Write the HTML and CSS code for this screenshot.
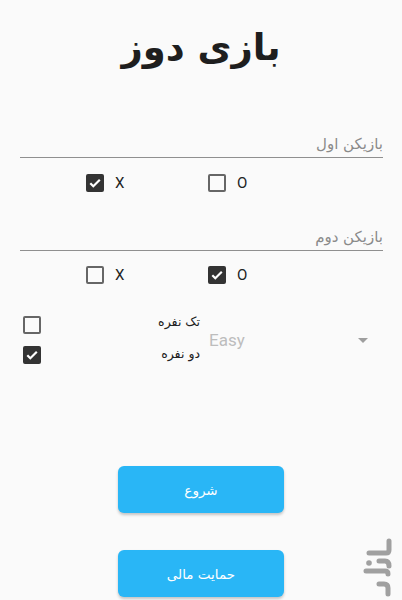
FILE: index.html
```html
<!DOCTYPE html>
<html lang="fa">
<head>
<meta charset="utf-8">
<title>بازی دوز</title>
<link rel="stylesheet" href="styles.css">
</head>
<body>
<div class="page">
  <h1 class="title">بازی دوز</h1>

  <div class="field field-first"><span class="placeholder">بازیکن اول</span></div>
  <div class="choice-row choice-row-first">
    <div class="choice"><span class="box checked"><svg viewBox="0 0 14 14"><path d="M2.3 7.2l3 3L11.8 3.8" /></svg></span><span class="choice-label">X</span></div>
    <div class="choice"><span class="box"></span><span class="choice-label">O</span></div>
  </div>

  <div class="field field-second"><span class="placeholder">بازیکن دوم</span></div>
  <div class="choice-row choice-row-second">
    <div class="choice"><span class="box"></span><span class="choice-label">X</span></div>
    <div class="choice"><span class="box checked"><svg viewBox="0 0 14 14"><path d="M2.3 7.2l3 3L11.8 3.8" /></svg></span><span class="choice-label">O</span></div>
  </div>

  <div class="mode">
    <div class="mode-boxes">
      <span class="box"></span>
      <span class="box checked"><svg viewBox="0 0 14 14"><path d="M2.3 7.2l3 3L11.8 3.8" /></svg></span>
    </div>
    <div class="mode-labels">
      <span class="mode-label">تک نفره</span>
      <span class="mode-label">دو نفره</span>
    </div>
    <div class="dropdown">
      <span class="dropdown-value">Easy</span>
      <span class="dropdown-arrow"></span>
    </div>
  </div>

  <button class="btn btn-start">شروع</button>
  <button class="btn btn-support">حمایت مالی</button>

  <svg class="watermark" viewBox="0 0 40 60" width="40" height="60">
    <g fill="none" stroke="#a0a0a0" stroke-width="5" stroke-linecap="round" stroke-linejoin="round">
      <path d="M27 3 V12 Q27 15 24 15 H7" />
      <path d="M17 23 H23 Q27 23 27 28" />
      <path d="M4 33 H23 Q26 33 26 36" />
      <path d="M17 46 H22 Q26 46 26 50 V56" />
    </g>
    <circle cx="7" cy="25" r="2.8" fill="#a0a0a0" />
  </svg>
</div>
</body>
</html>
```

FILE: styles.css
```css
html, body {
  margin: 0;
  padding: 0;
  background: #fafafa;
}

.page {
  position: relative;
  width: 402px;
  height: 600px;
  overflow: hidden;
  font-family: Roboto, "DejaVu Sans", sans-serif;
  color: #222;
}

.title {
  margin: 0;
  padding-top: 23px;
  font-family: "DejaVu Sans", sans-serif;
  font-size: 37px;
  font-weight: bold;
  line-height: 50px;
  text-align: center;
  direction: rtl;
  color: #1e1e1e;
}

.field {
  margin: 0 19px 0 20px;
  height: 27px;
  border-bottom: 1.5px solid #8f8f8f;
  direction: rtl;
  display: flex;
  align-items: center;
}

.field-first { margin-top: 57px; }
.field-second { margin-top: 31px; }

.placeholder {
  font-family: "DejaVu Sans", sans-serif;
  font-size: 15px;
  color: #8a8a8a;
}

.choice-row {
  display: flex;
  padding-left: 86px;
  height: 18px;
}

.choice-row-first { margin-top: 16px; }
.choice-row-second { margin-top: 15px; }

.choice {
  width: 122px;
  display: flex;
  align-items: center;
  gap: 11px;
}

.choice-label {
  font-size: 15px;
  color: #222;
  line-height: 18px;
}

.box {
  width: 18px;
  height: 18px;
  box-sizing: border-box;
  border: 2px solid #666;
  border-radius: 2px;
  display: block;
  flex: none;
}

.box.checked {
  background: #333;
  border-color: #333;
}

.box svg {
  display: block;
  width: 14px;
  height: 14px;
}

.box svg path {
  fill: none;
  stroke: #fff;
  stroke-width: 2.2;
}

.mode {
  margin-top: 32px;
  display: flex;
  align-items: center;
  height: 48px;
}

.mode-boxes {
  padding-left: 23px;
  display: flex;
  flex-direction: column;
  gap: 12px;
}

.mode-labels {
  width: 159px;
  display: flex;
  flex-direction: column;
  align-items: flex-start;
  gap: 14px;
  direction: rtl;
  margin-top: -4px;
}

.mode-label {
  font-family: "DejaVu Sans", sans-serif;
  font-size: 12.5px;
  line-height: 18px;
  color: #222;
}

.dropdown {
  margin-left: 9px;
  width: 159px;
  display: flex;
  align-items: center;
  justify-content: space-between;
}

.dropdown-value {
  font-size: 17px;
  color: #bdbdbd;
}

.dropdown-arrow {
  width: 0;
  height: 0;
  border-left: 5px solid transparent;
  border-right: 5px solid transparent;
  border-top: 5px solid #9e9e9e;
}

.btn {
  display: block;
  width: 166px;
  height: 47px;
  margin-left: 118px;
  border: none;
  border-radius: 6px;
  background: #29b6f6;
  color: #fff;
  font-family: "DejaVu Sans", sans-serif;
  font-size: 13.5px;
  box-shadow: 0 2px 3px rgba(0, 0, 0, 0.22);
  padding: 0;
}

.btn-start { margin-top: 102px; }
.btn-support { margin-top: 37px; }

.watermark {
  position: absolute;
  left: 362px;
  top: 538px;
}
```
